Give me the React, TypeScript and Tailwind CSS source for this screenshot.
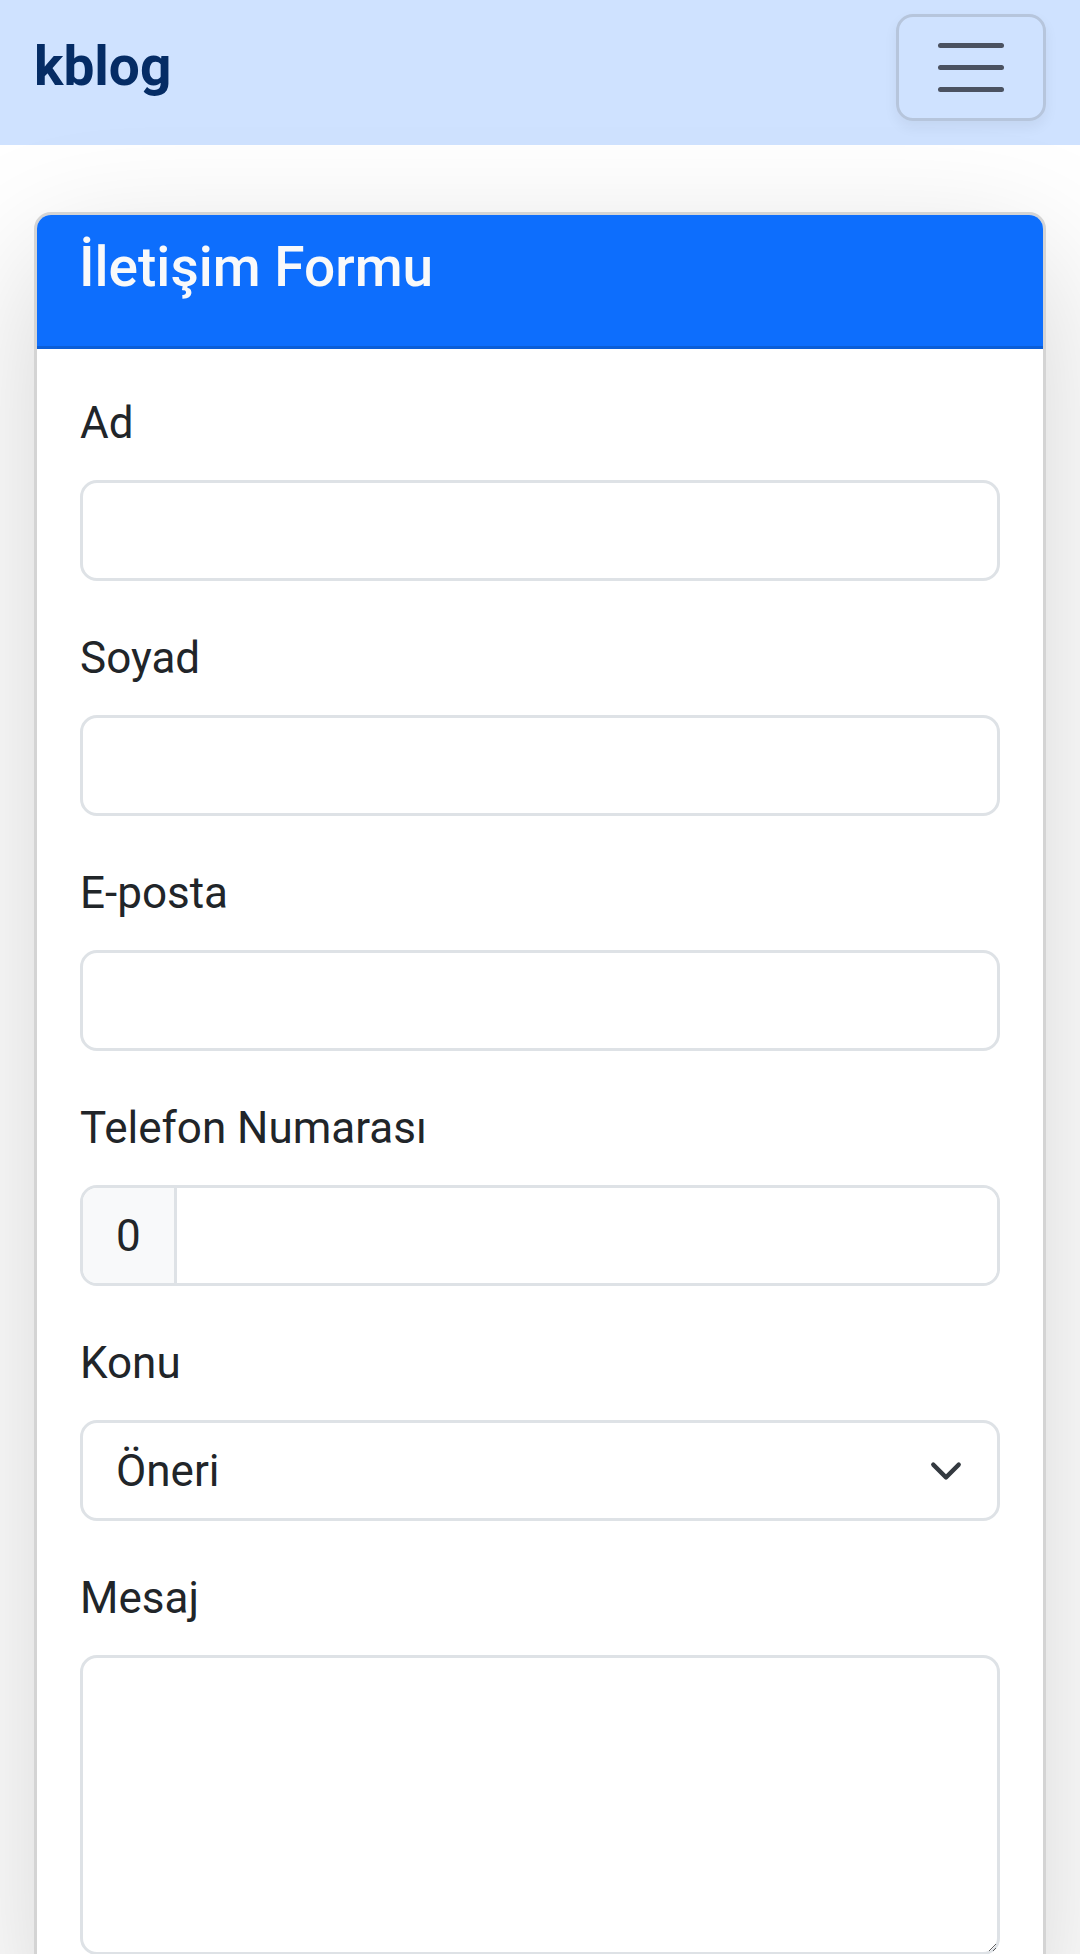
import React from "react";

export default function App() {
  const fields = [
    { id: "ad", label: "Ad" },
    { id: "soyad", label: "Soyad" },
    { id: "eposta", label: "E-posta" },
  ];

  return (
    <div className="min-h-[1954px] bg-white font-['Roboto','Liberation_Sans',sans-serif] text-[#212529] overflow-hidden">
      {/* Navbar */}
      <nav className="h-[145px] bg-[#cfe2ff] flex items-start justify-between pl-[34px] pr-[34px]">
        <a className="mt-[33px] text-[55px] leading-[67px] font-bold text-[#052c65]">kblog</a>
        <button className="mt-[14px] w-[150px] h-[107px] rounded-[17px] border-[3px] border-[#b6c5dc] shadow-[0_6px_14px_rgba(0,0,0,0.06)] flex flex-col items-center justify-center gap-[17px]">
          <span className="block w-[66px] h-[5px] rounded-full bg-[#4b5261]" />
          <span className="block w-[66px] h-[5px] rounded-full bg-[#4b5261]" />
          <span className="block w-[66px] h-[5px] rounded-full bg-[#4b5261]" />
        </button>
      </nav>

      {/* Content */}
      <main className="px-[34px] pt-[67px]">
        <div className="rounded-[17px] border-[3px] border-[#d4d4d4] bg-white overflow-hidden shadow-[0_45px_135px_rgba(0,0,0,0.175)]">
          {/* Card header */}
          <div className="bg-[#0d6efd] border-b-[3px] border-[#0b5ed7] h-[134px] pl-[42px] pt-[19px]">
            <h4 className="text-[55px] leading-[67px] font-medium text-[#f8f9fa]">İletişim Formu</h4>
          </div>

          {/* Card body */}
          <form className="px-[43px] pt-[41px]">
            {fields.map((f) => (
              <div key={f.id} className="mb-[44px]">
                <label htmlFor={f.id} className="block text-[44px] leading-[67.5px] mb-[22.5px]">
                  {f.label}
                </label>
                <input
                  id={f.id}
                  type="text"
                  className="block w-full h-[101px] rounded-[17px] border-[3px] border-[#dee2e6] bg-white px-[33px] text-[44px] outline-none"
                />
              </div>
            ))}

            <div className="mb-[44px]">
              <label htmlFor="tel" className="block text-[44px] leading-[67.5px] mb-[22.5px]">
                Telefon Numarası
              </label>
              <div className="flex h-[101px] rounded-[17px] border-[3px] border-[#dee2e6] overflow-hidden">
                <span className="flex items-center bg-[#f8f9fa] border-r-[3px] border-[#dee2e6] px-[33px] text-[44px]">0</span>
                <input id="tel" type="tel" className="flex-1 min-w-0 bg-white px-[33px] text-[44px] outline-none" />
              </div>
            </div>

            <div className="mb-[44px]">
              <label htmlFor="konu" className="block text-[44px] leading-[67.5px] mb-[22.5px]">
                Konu
              </label>
              <div className="relative">
                <div
                  id="konu"
                  className="flex items-center h-[101px] rounded-[17px] border-[3px] border-[#dee2e6] bg-white px-[33px] text-[44px]"
                >
                  Öneri
                </div>
                <svg
                  className="absolute right-[37px] top-1/2 -translate-y-1/2"
                  width="34"
                  height="34"
                  viewBox="0 0 16 16"
                  fill="none"
                  stroke="#343a40"
                  strokeWidth="2"
                  strokeLinecap="round"
                  strokeLinejoin="round"
                >
                  <path d="m2 5 6 6 6-6" />
                </svg>
              </div>
            </div>

            <div className="mb-[44px]">
              <label htmlFor="mesaj" className="block text-[44px] leading-[67.5px] mb-[22.5px]">
                Mesaj
              </label>
              <textarea
                id="mesaj"
                className="block w-full h-[300px] rounded-[17px] border-[3px] border-[#dee2e6] bg-white px-[33px] text-[44px] outline-none"
              />
            </div>
          </form>
        </div>
      </main>
    </div>
  );
}
